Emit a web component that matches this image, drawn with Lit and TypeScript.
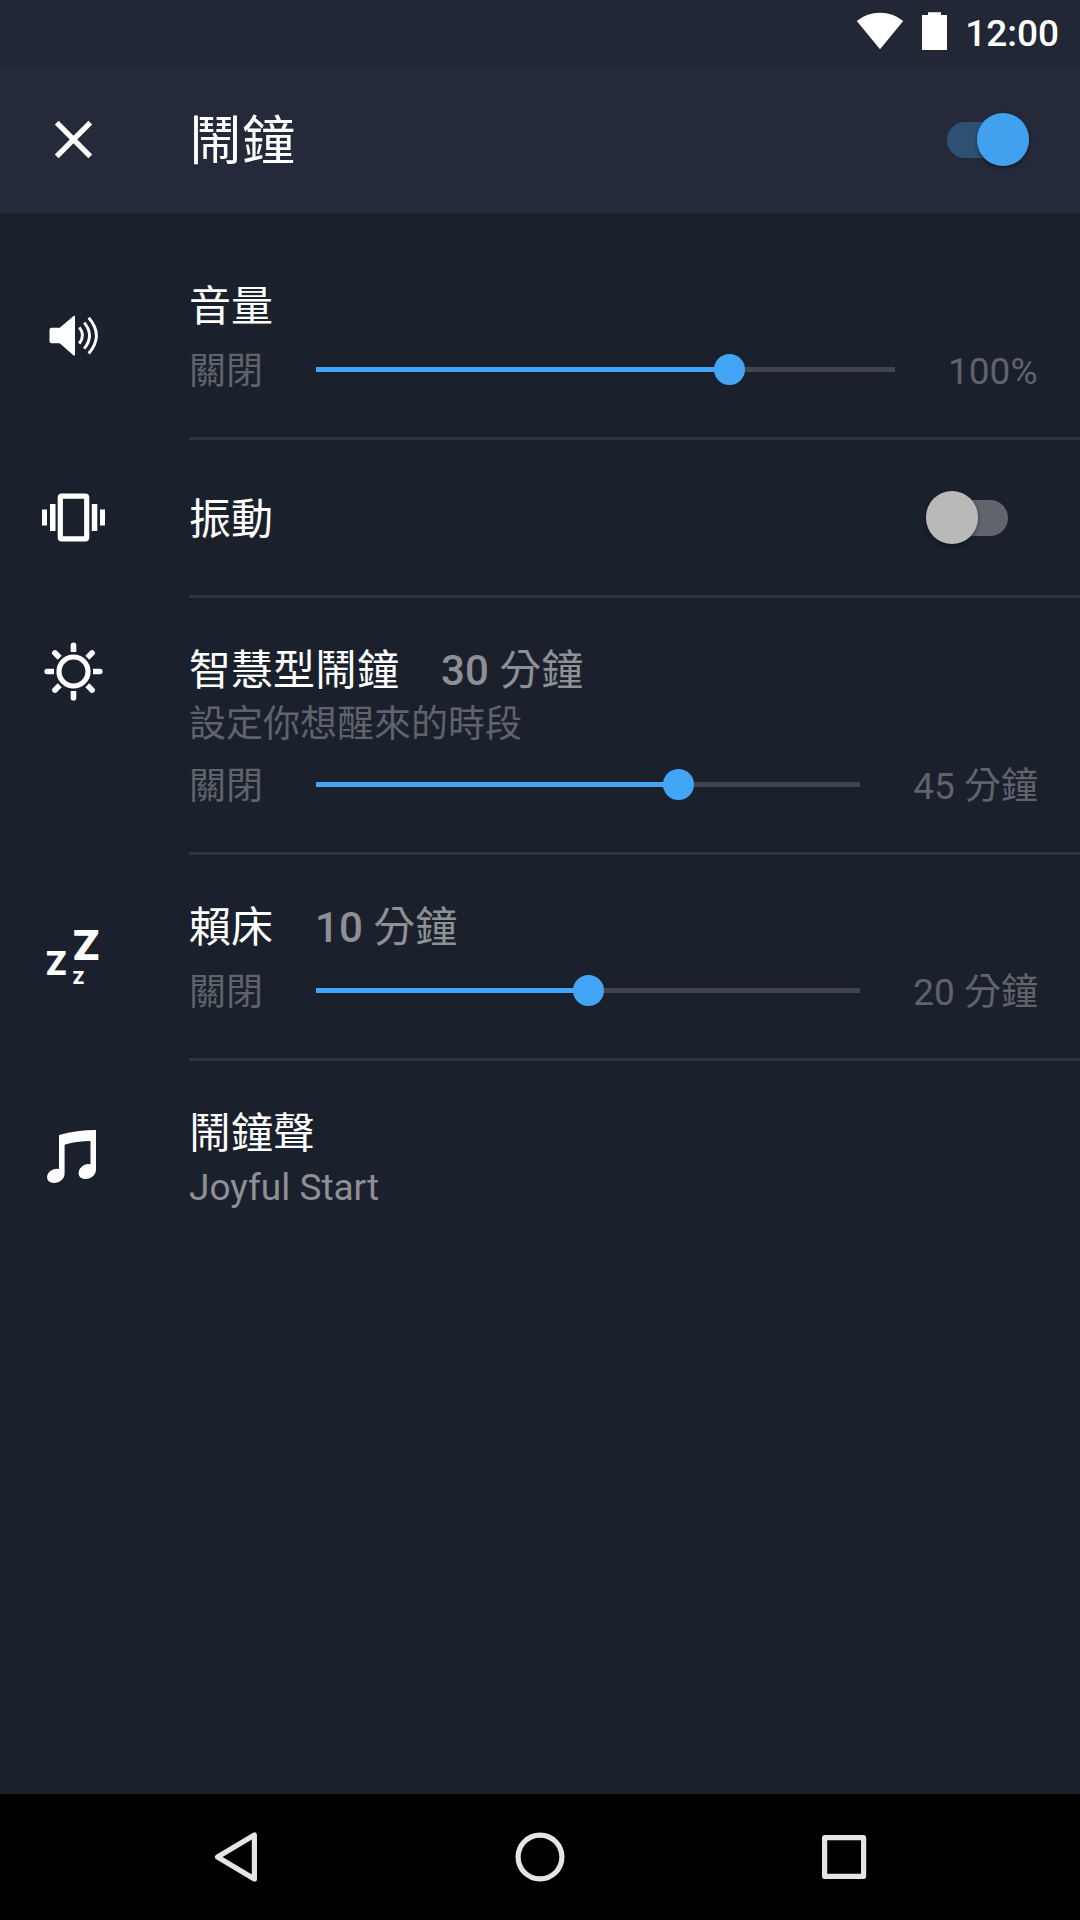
import { LitElement, html, svg, css, nothing, TemplateResult } from "lit";
import { customElement, property } from "lit/decorators.js";
import { classMap } from "lit/directives/class-map.js";

@customElement("toggle-switch")
class ToggleSwitch extends LitElement {
  @property({ type: Boolean }) on = false;

  static styles = css`
    :host { display: block; }
    .track {
      display: flex;
      align-items: center;
      box-sizing: border-box;
      width: 82.500px;
      height: 36px;
      border-radius: 18px;
      background: #61646c;
    }
    .track.on { justify-content: flex-end; background: #2e5072; }
    .thumb {
      flex: none;
      width: 52.500px;
      height: 52.500px;
      border-radius: 50%;
      background: #b9b9b9;
      box-shadow: 0 2px 4px rgba(0, 0, 0, 0.4);
    }
    .on .thumb { background: #42a1ef; }
  `;

  render() {
    return html`<div class=${classMap({ track: true, on: this.on })}><div class="thumb"></div></div>`;
  }
}

@customElement("range-slider")
class RangeSlider extends LitElement {
  @property({ type: Number }) value = 0;

  static styles = css`
    :host { display: block; flex: 1; }
    .rail { display: flex; align-items: center; height: 5px; background: #42454d; }
    .fill { display: flex; align-items: center; justify-content: flex-end; height: 5px; background: #42a5f5; }
    .thumb { flex: none; width: 31px; height: 31px; margin-right: -15.5px; border-radius: 50%; background: #42a5f5; }
  `;

  render() {
    return html`<div class="rail">
      <div class="fill" style="width:${this.value}%"><div class="thumb"></div></div>
    </div>`;
  }
}

interface Setting {
  icon: TemplateResult;
  title: string;
  amount?: string;
  unit?: string;
  hint?: string;
  sub?: string;
  slider?: { value: number; max: string };
  toggle?: boolean;
  kind: string;
}

const volumeIcon = svg`<svg class="glyph" viewBox="0 295 147 84">
  <path fill="#fff" d="M51.500 327.700h8.200L73.600 316q1.400-.6 1.400.6v38.200q0 1.200-1.400.6L59.700 343.300h-8.200q-2 0-2-2v-11.600q0-2 2-2z"/>
  <g fill="none" stroke="#fff" stroke-width="2.900">
    <path d="M79.300 327.400q6.400 8 0 16.200"/>
    <path d="M84.200 322.600q10.600 13 0 26"/>
    <path d="M88.700 317.700q15.400 17.800 0 35.800"/>
  </g>
</svg>`;

const vibrateIcon = svg`<svg class="glyph" viewBox="0 477 147 84">
  <rect x="60.300" y="496.100" width="26.400" height="42.800" rx="1.500" fill="none" stroke="#fff" stroke-width="5.200"/>
  <path fill="#fff" d="M50 504h5.500v27H50zM42 509.500h5v16h-5zM91.800 504h5.500v27h-5.500zM100 509.500h5v16h-5z"/>
</svg>`;

const rays = [0, 45, 90, 135, 180, 225, 270, 315];
const sunIcon = svg`<svg class="glyph" viewBox="0 630 147 84">
  <circle cx="73.500" cy="671.500" r="14.500" fill="none" stroke="#fff" stroke-width="5.200"/>
  ${rays.map(
    (a) => svg`<path transform="rotate(${a} 73.5 671.5)" fill="#fff"
      d="M70.700 652v-7q0-2.600 2.800-2.600t2.800 2.600v7z"/>`
  )}
</svg>`;

const snoozeIcon = svg`<svg class="glyph zzz" viewBox="0 916 147 84">
  <text><tspan x="73" y="959.700" font-size="43">Z</tspan><tspan x="46" y="975" font-size="33.500">Z</tspan><tspan x="72.700" y="984.300" font-size="18.500">Z</tspan></text>
</svg>`;

const musicIcon = svg`<svg class="glyph" viewBox="0 1116 147 84">
  <path fill="#fff" d="M59 1135q18-5 37-5v39.500c0 5.500-5 9.500-10.500 9.500-4.300 0-6.900-2.500-6.900-5.800 0-4.500 4.600-9.200 9.700-9.200q1.400 0 2.200.5V1141q-14 0-25.900 3.700v28.800c0 5.400-5.200 9.500-10.600 9.500-4.300 0-6.900-2.400-6.900-5.700 0-4.500 4.700-8.500 9.700-8.500q1.300 0 2.200.3z"/>
</svg>`;

const settings: Setting[] = [
  { kind: "volume", icon: volumeIcon, title: "音量", slider: { value: 71.45, max: "100%" } },
  { kind: "vibrate", icon: vibrateIcon, title: "振動", toggle: false },
  {
    kind: "smart", icon: sunIcon, title: "智慧型鬧鐘", amount: "30", unit: "分鐘",
    hint: "設定你想醒來的時段", slider: { value: 66.65, max: "45 分鐘" },
  },
  { kind: "snooze", icon: snoozeIcon, title: "賴床", amount: "10", unit: "分鐘", slider: { value: 50, max: "20 分鐘" } },
  { kind: "sound", icon: musicIcon, title: "鬧鐘聲", sub: "Joyful Start" },
];

@customElement("app-root")
class AppRoot extends LitElement {
  static styles = css`
    :host {
      display: flex;
      flex-direction: column;
      width: 1080px;
      height: 1920px;
      overflow: hidden;
      background: #1b212c;
      color: #fff;
      font-family: Roboto, "Noto Sans CJK TC", sans-serif;
    }
    .status {
      display: flex;
      align-items: center;
      justify-content: flex-end;
      flex: none;
      height: 66px;
      box-sizing: border-box;
      padding-right: 21px;
      background: #212734;
    }
    .signals { display: block; width: 110px; height: 66px; }
    .clock { padding-top: 1px; font-size: 37px; font-weight: 500; line-height: 66px; }
    .header {
      display: flex;
      align-items: center;
      flex: none;
      height: 147px;
      box-sizing: border-box;
      padding-right: 51px;
      background: #252a3a;
    }
    .close { display: block; width: 147px; height: 147px; }
    .heading { flex: 1; margin: 0; padding: 4px 0 0 42px; font-size: 53px; line-height: 76px; font-weight: 400; }
    .list { flex: 1; }
    .row { display: flex; align-items: center; }
    .row.volume { padding-top: 21px; }
    .row.smart { align-items: flex-start; }
    .lead { flex: none; width: 147px; }
    .smart .lead { padding-top: 32px; }
    .glyph { display: block; width: 147px; height: 84px; }
    .zzz { fill: #fff; font-family: Roboto, sans-serif; font-weight: 900; }
    .body {
      flex: 1;
      box-sizing: border-box;
      margin-left: 42px;
      padding: 48px 42px 43px 0;
      border-bottom: 3px solid #313541;
    }
    .vibrate .body {
      display: flex;
      align-items: center;
      justify-content: space-between;
      height: 158px;
      padding: 0 72px 0 0;
    }
    .vibrate .line { padding-top: 4px; }
    .sound .body { border-bottom: none; padding-bottom: 42px; }
    .line { display: flex; font-size: 42px; line-height: 50px; height: 50px; white-space: pre; }
    .value { margin-left: 42px; color: #8d9095; }
    .num { font-weight: 500; }
    .hint { margin-top: 4px; height: 50px; font-size: 37px; line-height: 50px; color: #5f636b; }
    .sub { margin-top: 4px; height: 50px; font-size: 37px; line-height: 50px; color: #8d9095; }
    .control {
      display: flex;
      align-items: center;
      height: 49px;
      margin-top: 13px;
      font-size: 37px;
      line-height: 50px;
      color: #5f636b;
      white-space: pre;
    }
    .hint + .control { margin-top: 10px; }
    .min { width: 127px; padding-top: 5px; }
    .max { padding: 5px 0 0 53px; }
    .volume .max { padding-right: 0.5px; }
    .nav {
      display: flex;
      align-items: center;
      justify-content: center;
      flex: none;
      height: 126px;
      background: #000;
    }
    .keys { display: block; width: 720px; height: 126px; }
  `;

  private row(s: Setting) {
    return html`<section class="row ${s.kind}">
      <div class="lead">${s.icon}</div>
      <div class="body">
        <div class="line"><span>${s.title}</span>${s.amount
          ? html`<span class="value"><span class="num">${s.amount} </span>${s.unit}</span>`
          : nothing}</div>
        ${s.hint ? html`<div class="hint">${s.hint}</div>` : nothing}
        ${s.sub ? html`<div class="sub">${s.sub}</div>` : nothing}
        ${s.slider
          ? html`<div class="control"><span class="min">關閉</span><range-slider .value=${s.slider.value}></range-slider><span class="max">${s.slider.max}</span></div>`
          : nothing}
        ${s.toggle !== undefined ? html`<toggle-switch .on=${s.toggle}></toggle-switch>` : nothing}
      </div>
    </section>`;
  }

  render() {
    return html`
      <div class="status">
        <svg class="signals" viewBox="855 0 110 66">
          <path fill="#fff" d="M856.800 21Q867 12.800 880 12.800T903.200 21L880 49.200z"/>
          <path fill="#fff" d="M928 12.300h13v2.700h6v35h-25V15h6z"/>
        </svg>
        <span class="clock">12:00</span>
      </div>
      <header class="header">
        <svg class="close" viewBox="0 66 147 147">
          <path fill="none" stroke="#fff" stroke-width="5.400" d="M56.700 122.700l33.600 33.600M90.300 122.700l-33.600 33.600"/>
        </svg>
        <h1 class="heading">鬧鐘</h1>
        <toggle-switch .on=${true}></toggle-switch>
      </header>
      <main class="list">${settings.map((s) => this.row(s))}</main>
      <nav class="nav">
        <svg class="keys" viewBox="180 1794 720 126" fill="none" stroke="#e5e5e5" stroke-width="5.200" stroke-linejoin="round">
          <path d="M217.500 1857L254.400 1835V1879z"/>
          <circle cx="540" cy="1857" r="21.900"/>
          <rect x="824.600" y="1837.600" width="39" height="38.800" rx="0.500"/>
        </svg>
      </nav>
    `;
  }
}
